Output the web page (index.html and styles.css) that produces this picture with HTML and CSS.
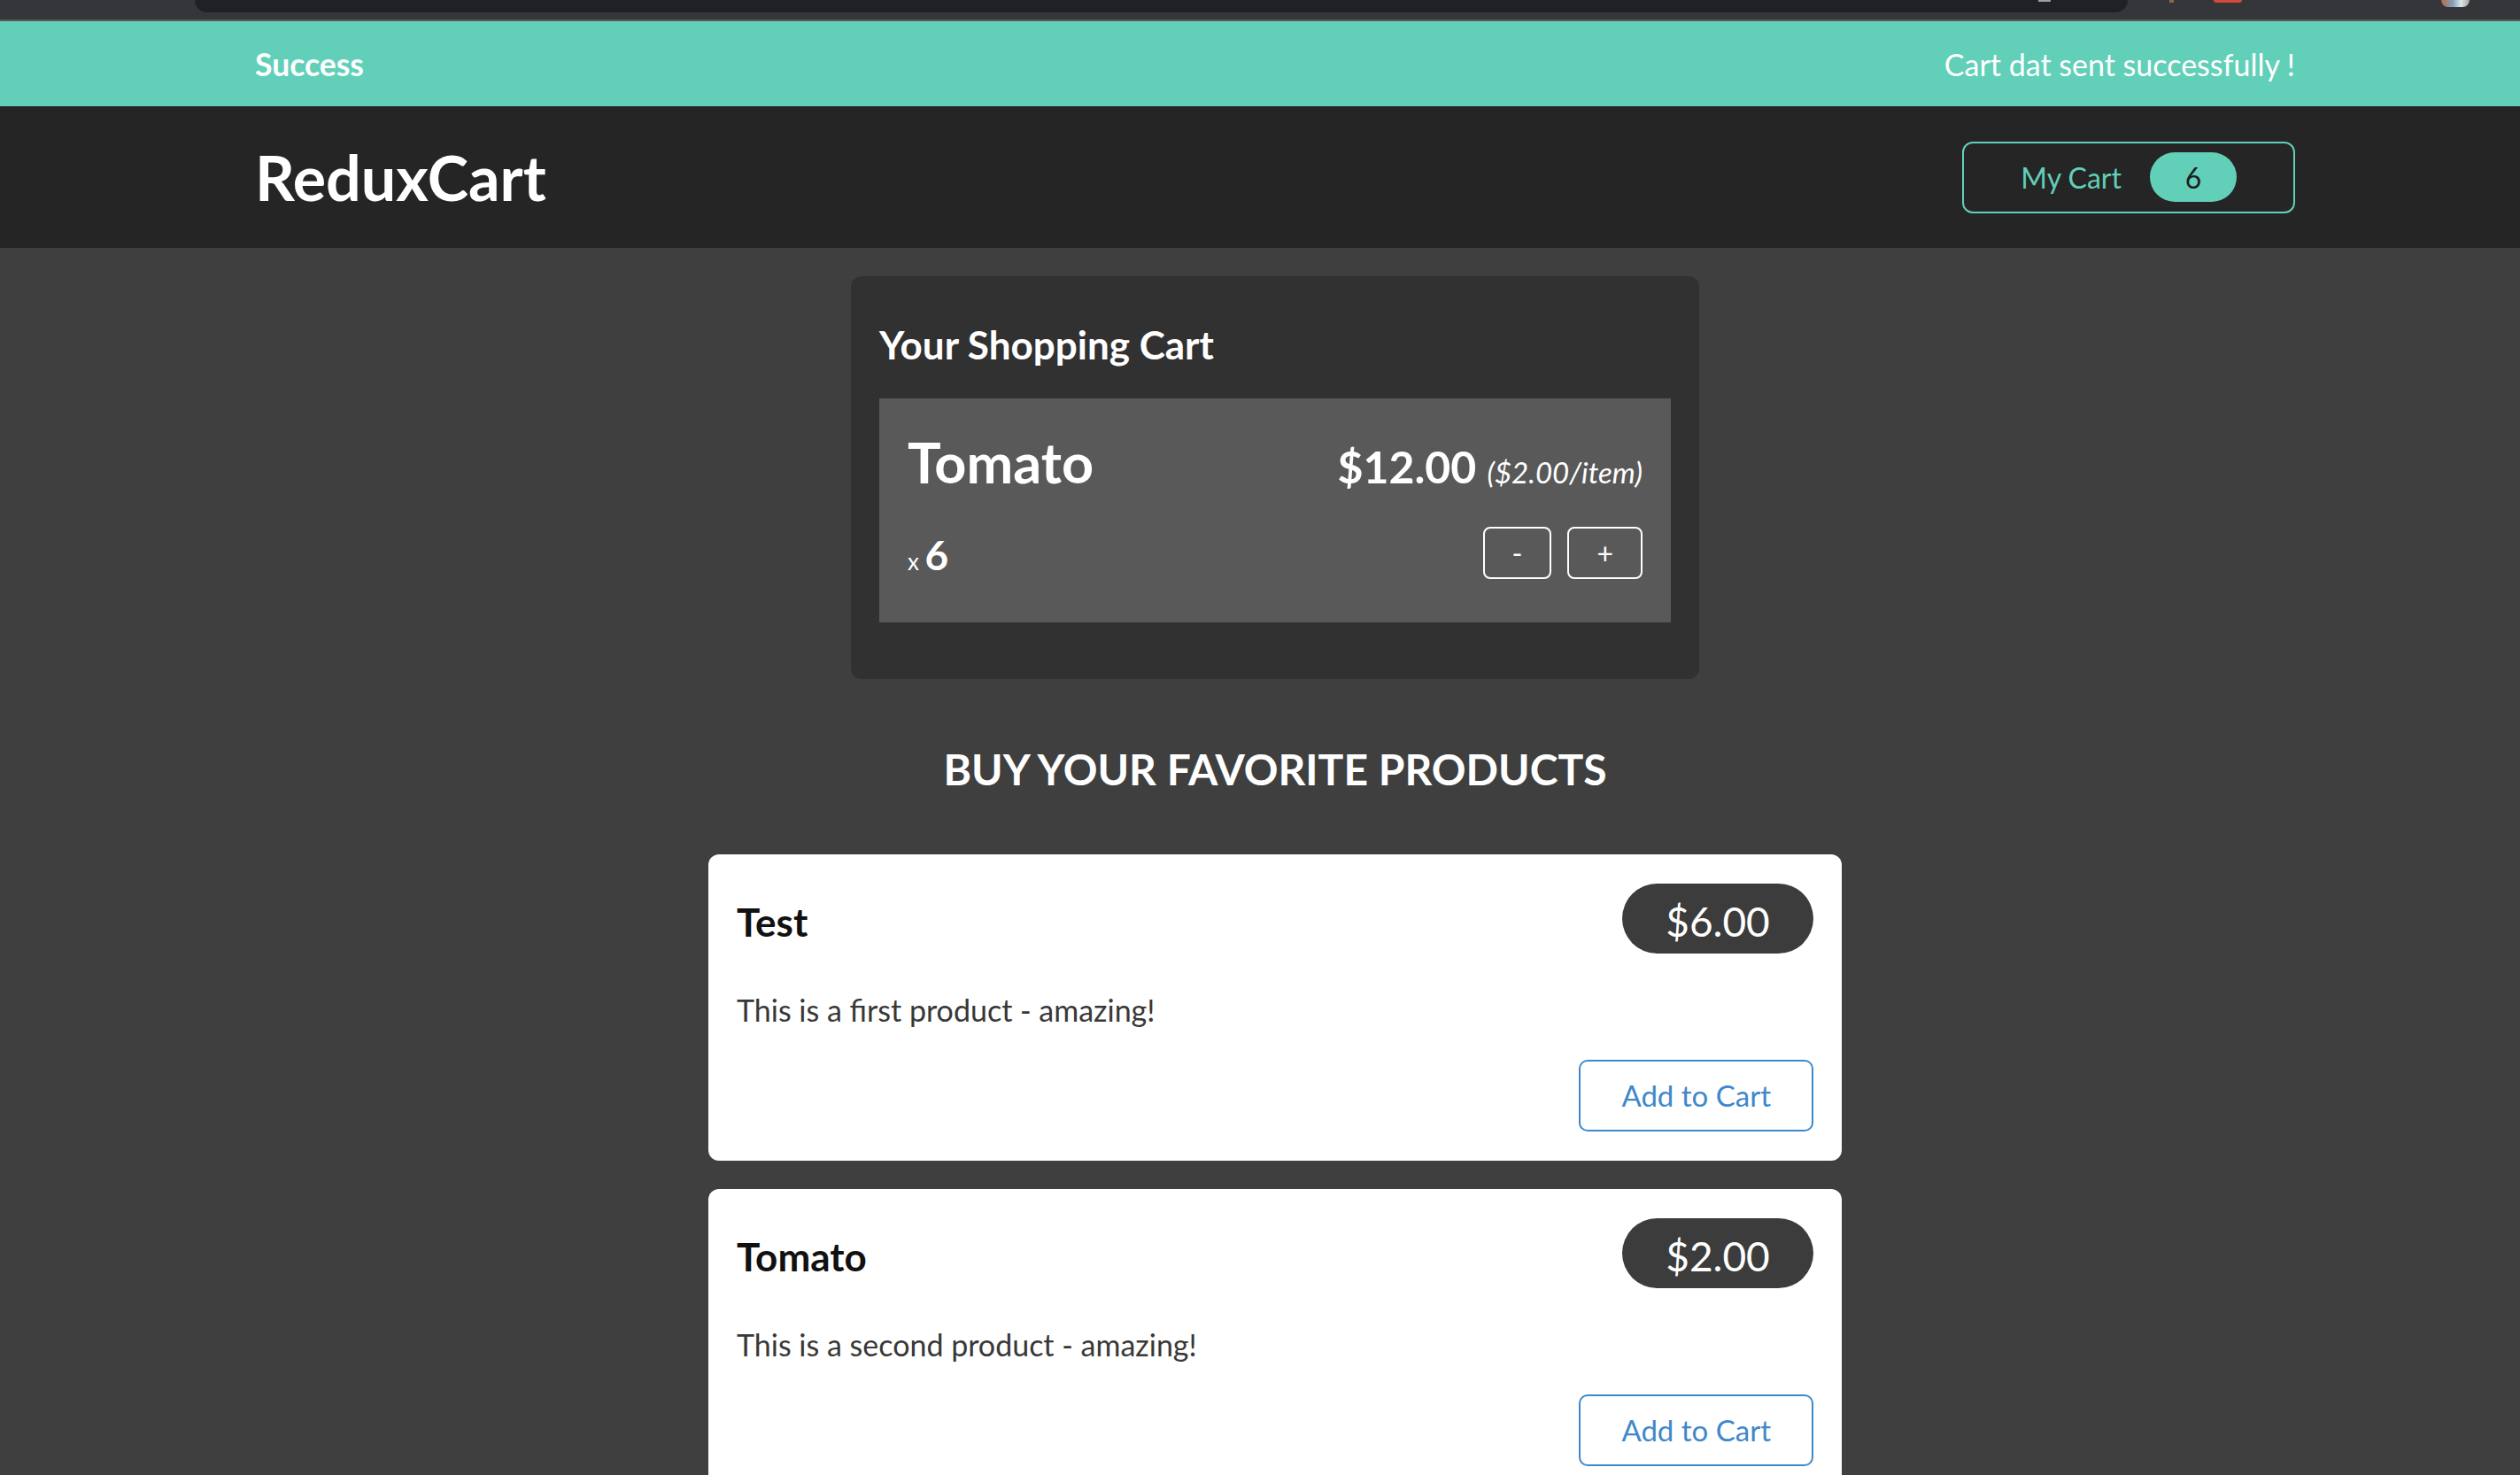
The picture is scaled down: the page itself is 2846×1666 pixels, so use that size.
FILE: index.html
```html
<!DOCTYPE html>
<html lang="en">
<head>
<meta charset="utf-8">
<title>ReduxCart</title>
<link rel="stylesheet" href="styles.css">
</head>
<body>
<div class="chrome">
  <div class="omnibox"><span class="omni-icon"></span></div>
  <span class="ext ext-brown"></span>
  <span class="ext ext-red"></span>
  <span class="avatar"></span>
</div>
<section class="notification">
  <div class="container">
    <h2 class="notif-title">Success</h2>
    <p class="notif-msg">Cart dat sent successfully !</p>
  </div>
</section>
<header class="main-header">
  <div class="container">
    <h1 class="logo">ReduxCart</h1>
    <button class="cart-button"><span>My Cart</span><span class="cart-badge">6</span></button>
  </div>
</header>
<main>
  <section class="cart">
    <h2 class="cart-title">Your Shopping Cart</h2>
    <ul class="cart-list">
      <li class="cart-item">
        <div class="cart-row">
          <h3 class="item-name">Tomato</h3>
          <div class="item-price">$12.00 <span class="item-unit">($2.00/item)</span></div>
        </div>
        <div class="cart-row2">
          <div class="item-qty">x <span class="qty-num">6</span></div>
          <div class="item-actions">
            <button class="qty-btn">-</button>
            <button class="qty-btn">+</button>
          </div>
        </div>
      </li>
    </ul>
  </section>
  <section class="products">
    <h2 class="products-title">Buy your favorite products</h2>
    <ul class="product-list">
      <li class="product-card">
        <header class="product-head">
          <h3 class="product-name">Test</h3>
          <div class="product-price">$6.00</div>
        </header>
        <p class="product-desc">This is a first product - amazing!</p>
        <div class="product-actions"><button class="add-btn">Add to Cart</button></div>
      </li>
      <li class="product-card">
        <header class="product-head">
          <h3 class="product-name">Tomato</h3>
          <div class="product-price">$2.00</div>
        </header>
        <p class="product-desc">This is a second product - amazing!</p>
        <div class="product-actions"><button class="add-btn">Add to Cart</button></div>
      </li>
    </ul>
  </section>
</main>
</body>
</html>
```

FILE: styles.css
```css
html {
  overflow: hidden;
}
body {
  margin: 0;
  width: 2880px;
  min-height: 1666px;
  background: #3f3f3f;
  font-family: Lato, "Liberation Sans", sans-serif;
}

/* browser chrome strip */
.chrome {
  height: 22px;
  background: #35363a;
  border-bottom: 2px solid #5a5a5d;
  display: flex;
  align-items: flex-start;
}
.omnibox {
  margin-left: 220px;
  width: 2183px;
  height: 14px;
  background: #202124;
  border-radius: 0 0 16px 16px;
  display: flex;
  justify-content: flex-end;
}
.omni-icon {
  width: 14px;
  height: 2px;
  background: #9aa0a6;
  margin-right: 87px;
}
.ext {
  display: block;
  height: 3px;
}
.ext-brown {
  width: 5px;
  background: #8a6a4a;
  margin-left: 47px;
}
.ext-red {
  width: 32px;
  background: #d5493c;
  margin-left: 45px;
  border-radius: 0 0 3px 3px;
}
.avatar {
  width: 32px;
  height: 8px;
  margin-left: 225px;
  border-radius: 0 0 16px 16px;
  background: linear-gradient(90deg, #b86a4a 0%, #7fa0b8 40%, #dfe6e8 70%, #9aa8a0 100%);
}

.container {
  width: 2304px;
  height: 100%;
  margin: 0 auto;
  display: flex;
  justify-content: space-between;
  align-items: center;
}

/* notification */
.notification {
  height: 96px;
  background: #62cfb9;
  color: #fff;
}
.notif-title {
  margin: 0;
  font-size: 35.5px;
  font-weight: 700;
}
.notif-msg {
  margin: 0;
  font-size: 34px;
}

/* header */
.main-header {
  height: 160px;
  background: #252525;
}
.logo {
  margin: 0;
  color: #fff;
  font-size: 70px;
  font-weight: 700;
}
.cart-button {
  box-sizing: border-box;
  height: 81px;
  display: flex;
  align-items: center;
  gap: 32px;
  padding: 0 64px;
  background: transparent;
  border: 2px solid #62cfb9;
  border-radius: 12px;
  color: #62cfb9;
  font-family: inherit;
  font-size: 32px;
}
.cart-badge {
  width: 98px;
  height: 56px;
  border-radius: 28px;
  background: #62cfb9;
  color: #1e1e1e;
  display: flex;
  align-items: center;
  justify-content: center;
  font-size: 32px;
}

/* cart */
.cart {
  box-sizing: border-box;
  width: 958px;
  margin: 32px auto 0;
  padding: 32px 32px 64px;
  background: #313131;
  border-radius: 12px;
  color: #fff;
}
.cart-title {
  margin: 18.6px 0 34.6px;
  font-size: 44px;
  font-weight: 700;
  line-height: 1.2;
}
.cart-list {
  list-style: none;
  margin: 0;
  padding: 0;
}
.cart-item {
  background: #595959;
  padding: 36.3px 32px 49px;
}
.cart-row {
  display: flex;
  justify-content: space-between;
  align-items: baseline;
}
.item-name {
  margin: 0;
  font-size: 63px;
  font-weight: 700;
  line-height: 72px;
}
.item-price {
  font-size: 50px;
  font-weight: 700;
  line-height: 1;
}
.item-unit {
  font-size: 33px;
  font-weight: 400;
  font-style: italic;
}
.cart-row2 {
  display: flex;
  justify-content: space-between;
  align-items: flex-start;
  margin-top: 36.7px;
  height: 59px;
}
.item-qty {
  margin-top: 9px;
  font-size: 26px;
  line-height: 46px;
}
.qty-num {
  font-size: 46px;
  font-weight: 700;
}
.item-actions {
  display: flex;
  gap: 18px;
}
.qty-btn {
  height: 59px;
  padding: 0 31px;
  background: transparent;
  border: 2px solid #fff;
  border-radius: 8px;
  color: #fff;
  font-family: inherit;
  font-size: 32px;
}

/* products */
.products {
  width: 1280px;
  margin: 0 auto;
}
.products-title {
  margin: 72.6px 0 67.8px;
  color: #fff;
  font-size: 48px;
  font-weight: 700;
  line-height: 1.2;
  text-align: center;
  text-transform: uppercase;
}
.product-list {
  list-style: none;
  margin: 0;
  padding: 0;
  display: flex;
  flex-direction: column;
  gap: 32px;
}
.product-card {
  background: #fff;
  border-radius: 12px;
  padding: 33px 32px 33px;
}
.product-head {
  display: flex;
  justify-content: space-between;
  align-items: baseline;
}
.product-name {
  margin: 0;
  color: #111;
  font-size: 44px;
  font-weight: 700;
  line-height: 1.2;
}
.product-price {
  box-sizing: border-box;
  width: 216px;
  height: 79px;
  padding-top: 7px;
  line-height: 72px;
  border-radius: 40px;
  background: #3c3c3c;
  color: #fff;
  font-size: 46px;
  text-align: center;
}
.product-desc {
  margin: 44.4px 0 0;
  color: #383838;
  font-size: 34px;
  line-height: 1.2;
}
.product-actions {
  display: flex;
  justify-content: flex-end;
  margin-top: 34.8px;
}
.add-btn {
  height: 81px;
  padding: 0 46px;
  background: #fff;
  border: 2px solid #3f88c9;
  border-radius: 10px;
  color: #3f88c9;
  font-family: inherit;
  font-size: 33px;
}
```
